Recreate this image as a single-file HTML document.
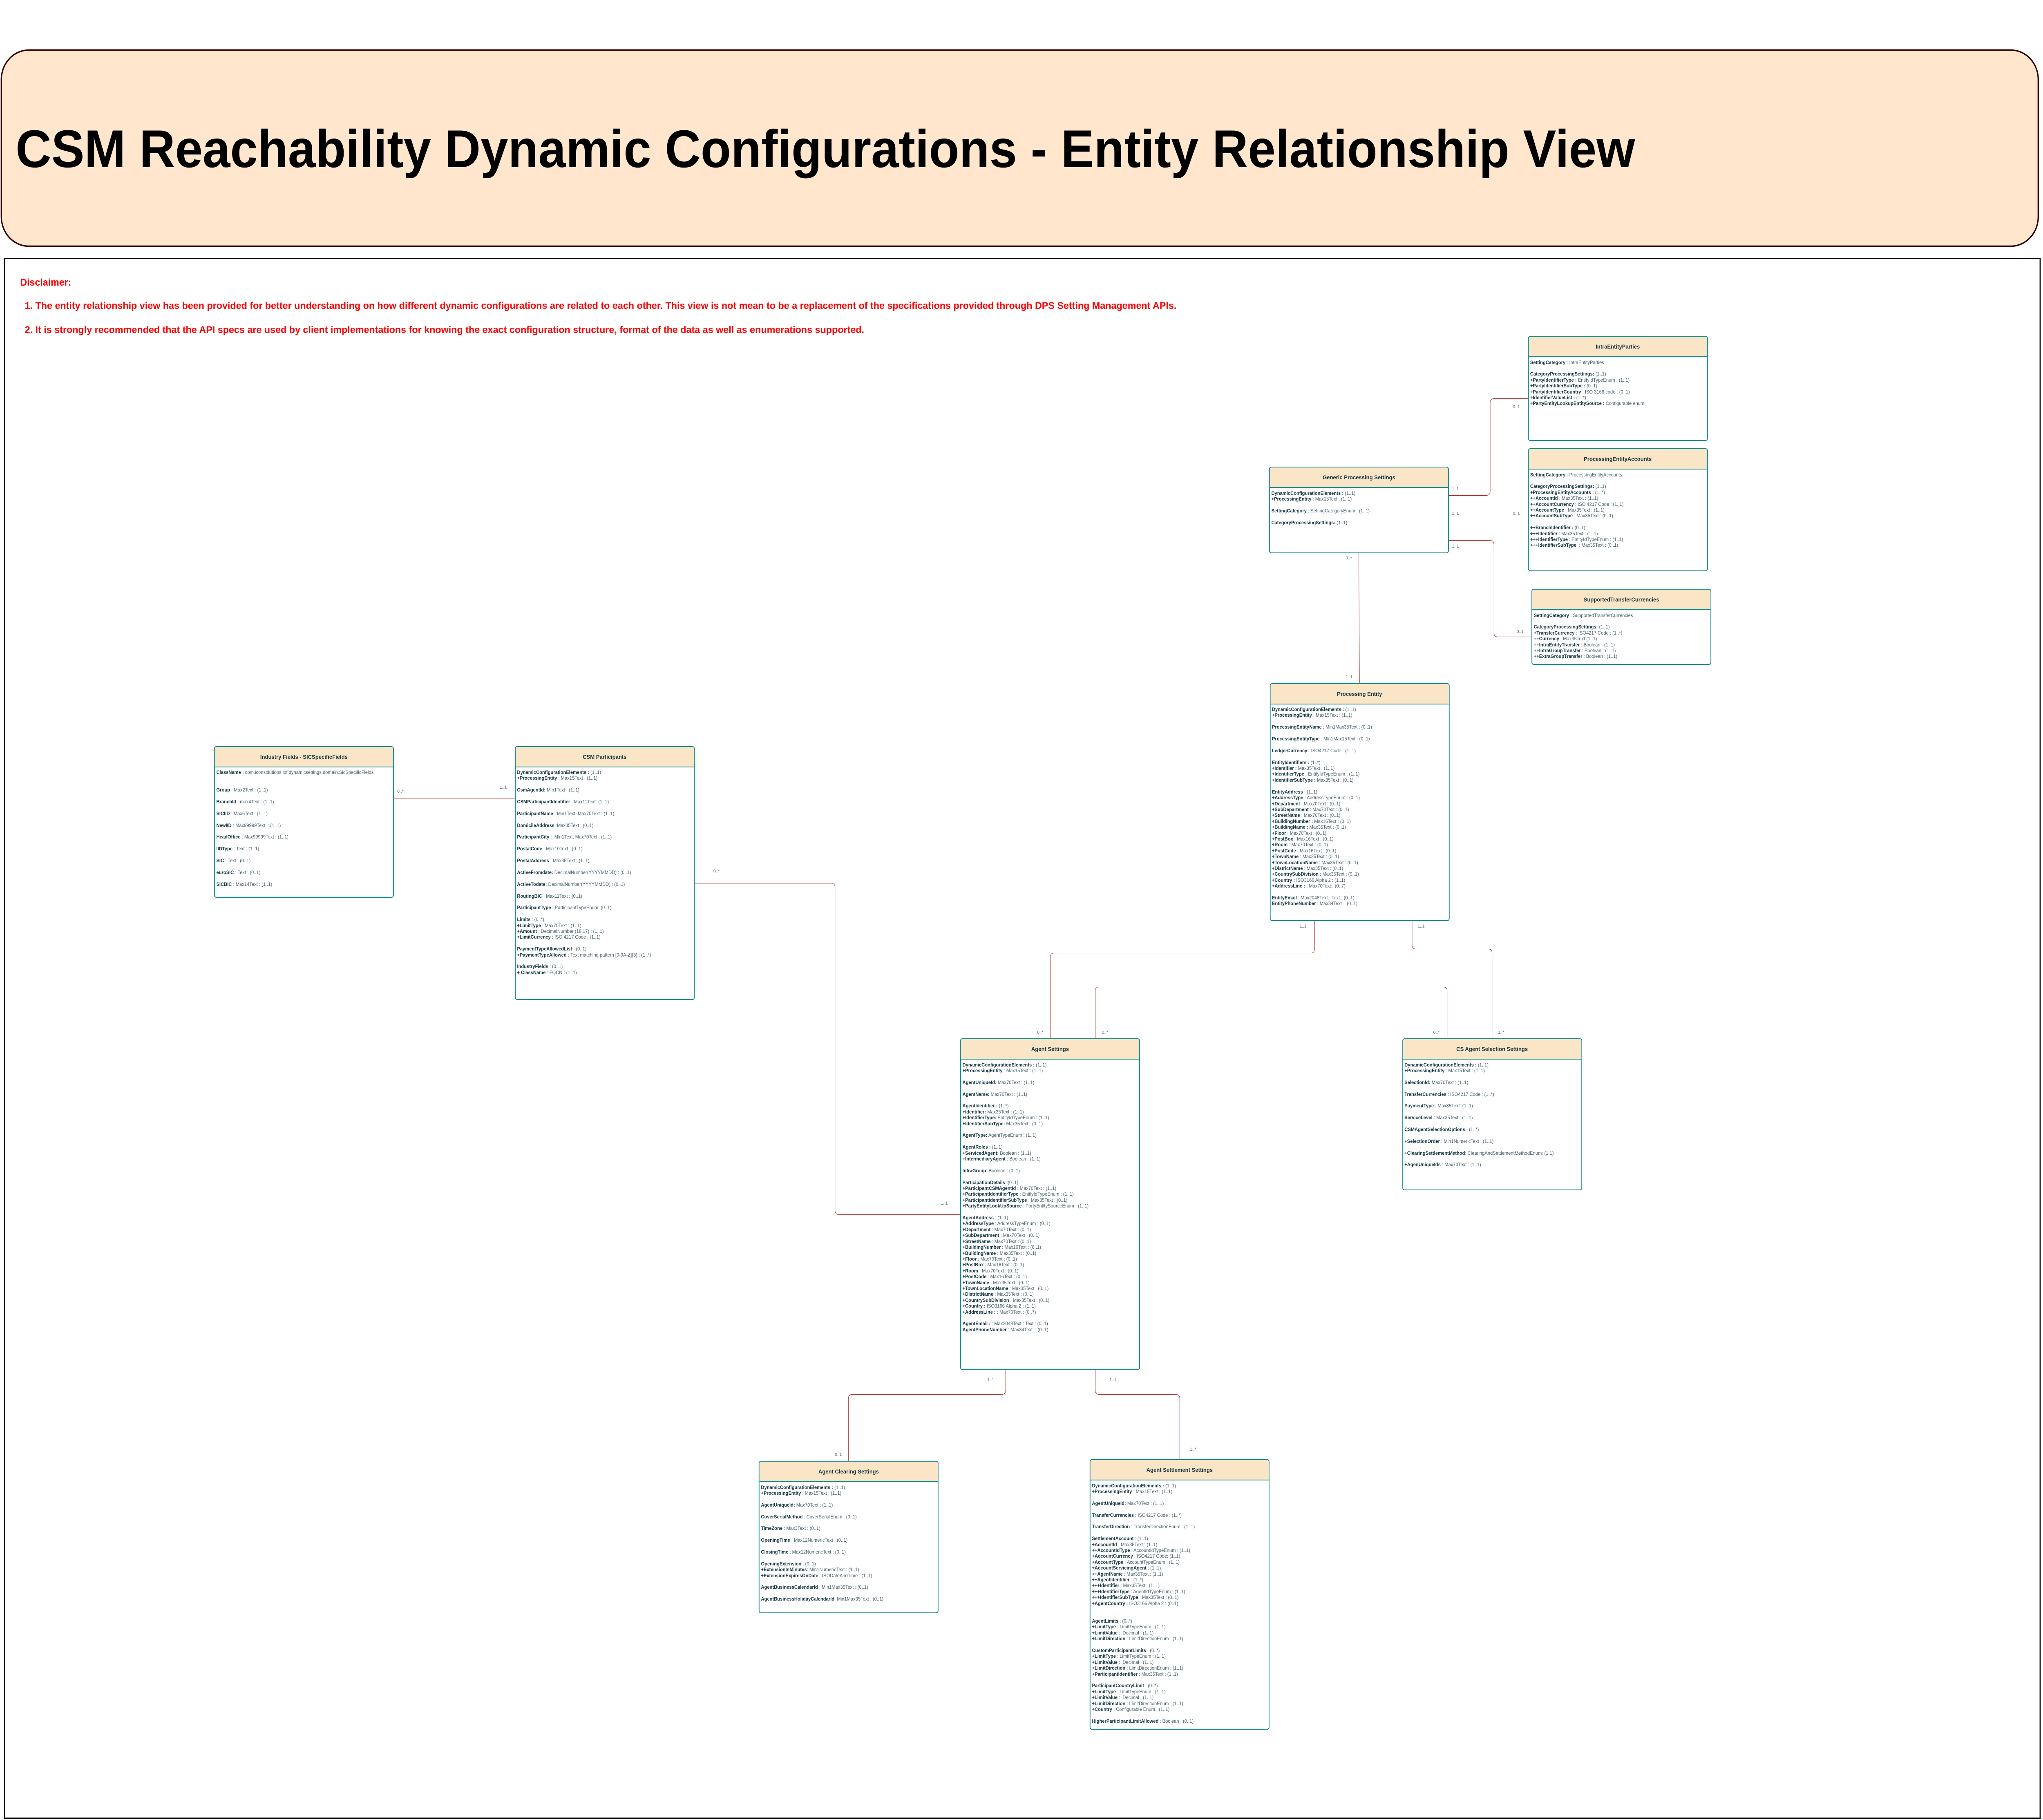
<!DOCTYPE html>
<html lang="en">
<head>
<meta charset="utf-8">
<title>CSM Reachability Dynamic Configurations - Entity Relationship View</title>
<style>
html,body{margin:0;padding:0;background:#fff;width:100%;height:100%;overflow:hidden;font-family:"Liberation Sans",Arial,sans-serif}
svg.root{position:fixed;left:0;top:0;width:100vw;height:100vh;display:block}
.page{position:relative;width:5364px;height:4454px;overflow:hidden}
.box{position:absolute;box-sizing:border-box;width:472px;border:2px solid #0F8B8D;border-radius:6px;background:#fff}
.hd{box-sizing:content-box;height:48px;line-height:48px;background:#FAE5C7;border-bottom:2px solid #0F8B8D;border-radius:4px 4px 0 0;text-align:center;font-size:14px;font-weight:bold;color:#143642;white-space:pre}
.tx{position:absolute;left:4px;top:55.5px;font-size:12px;line-height:14.4px;color:#4a636e;white-space:pre}
.tx b{color:#143642}
.l{position:absolute;font-size:11px;line-height:14px;color:#5a6f78;white-space:pre}
</style>
</head>
<body>
<svg class="root" viewBox="0 0 5364 4454" preserveAspectRatio="none" xmlns="http://www.w3.org/2000/svg">
<rect x="3.5" y="122.5" width="5348" height="480" rx="72" ry="72" fill="#FFE6CC" stroke="#330000" stroke-width="3.5"/>
<rect x="11.5" y="632.5" width="5345" height="3817" fill="#fff" stroke="#000" stroke-width="3"/>
<text x="41" y="409" font-family="Liberation Sans, Arial, sans-serif" font-size="130" font-weight="bold" fill="#000">CSM Reachability Dynamic Configurations - Entity Relationship View</text>
<text x="53" y="699" font-family="Liberation Sans, Arial, sans-serif" font-size="24" font-weight="bold" fill="#FF0000" textLength="134" lengthAdjust="spacingAndGlyphs">Disclaimer:</text>
<text x="65" y="756" font-family="Liberation Sans, Arial, sans-serif" font-size="24" font-weight="bold" fill="#FF0000" textLength="3024" lengthAdjust="spacingAndGlyphs">1. The entity relationship view has been provided for better understanding on how different dynamic configurations are related to each other. This view is not mean to be a replacement of the specifications provided through DPS Setting Management APIs.</text>
<text x="65" y="815" font-family="Liberation Sans, Arial, sans-serif" font-size="24" font-weight="bold" fill="#FF0000" textLength="2204" lengthAdjust="spacingAndGlyphs">2. It is strongly recommended that the API specs are used by client implementations for knowing the exact configuration structure, format of the data as well as enumerations supported.</text>
<g fill="none" stroke="#A8201A" stroke-width="1">
<path d="M3803 1212.5H3902Q3912.5 1212.5 3912.5 1202V985.5Q3912.5 975.5 3922.5 975.5H4012"/>
<path d="M3803 1272.5H4012"/>
<path d="M3803 1322.5H3912Q3922.5 1322.5 3922.5 1333V1548.5Q3922.5 1558.5 3932.5 1558.5H4022"/>
<path d="M3567.5 1352L3569.5 1672"/>
<path d="M3451.5 2253V2322Q3451.5 2332.5 3441 2332.5H2767.5Q2757.5 2332.5 2757.5 2342.5V2542"/>
<path d="M3707.5 2253V2312.5Q3707.5 2322.5 3717.5 2322.5H3907.5Q3917.5 2322.5 3917.5 2332.5V2542"/>
<path d="M2875.5 2542V2425.5Q2875.5 2415.5 2885.5 2415.5H3789.5Q3799.5 2415.5 3799.5 2425.5V2542"/>
<path d="M1822 2161.5H2182Q2192.5 2161.5 2192.5 2172V2962Q2192.5 2972.5 2203 2972.5H2522"/>
<path d="M2640.5 3352V3402Q2640.5 3412.5 2630 3412.5H2237.5Q2227.5 3412.5 2227.5 3422.5V3576"/>
<path d="M2875.5 3352V3402Q2875.5 3412.5 2886 3412.5H3087.5Q3097.5 3412.5 3097.5 3422.5V3572"/>
<path d="M1033 1953.5H1352"/>
</g>
<foreignObject x="0" y="0" width="5364" height="4454">
<div xmlns="http://www.w3.org/1999/xhtml" class="page">

<div class="l" style="left:3812px;top:1190px">1..1</div>
<div class="l" style="left:3972px;top:989px">0..1</div>
<div class="l" style="left:3812px;top:1250px">1..1</div>
<div class="l" style="left:3972px;top:1250px">0..1</div>
<div class="l" style="left:3812px;top:1330px">1..1</div>
<div class="l" style="left:3982px;top:1539px">0..1</div>
<div class="l" style="left:3533px;top:1359px">0..*</div>
<div class="l" style="left:3533px;top:1650px">1..1</div>
<div class="l" style="left:3412px;top:2260px">1..1</div>
<div class="l" style="left:3722px;top:2260px">1..1</div>
<div class="l" style="left:2723px;top:2520px">0..*</div>
<div class="l" style="left:2893px;top:2520px">0..*</div>
<div class="l" style="left:3763px;top:2520px">0..*</div>
<div class="l" style="left:3933px;top:2520px">1..*</div>
<div class="l" style="left:1043px;top:1930px">0..*</div>
<div class="l" style="left:1312px;top:1920px">1..1</div>
<div class="l" style="left:1873px;top:2125px">0..*</div>
<div class="l" style="left:2470px;top:2938px">1..1</div>
<div class="l" style="left:2592px;top:3370px">1..1</div>
<div class="l" style="left:2913px;top:3370px">1..1</div>
<div class="l" style="left:2192px;top:3553px">0..1</div>
<div class="l" style="left:3124px;top:3540px">1..*</div>

<div class="box" style="left:3332px;top:1142px;height:211.5px"><div class="hd">Generic Processing Settings</div><div class="tx"><b>DynamicConfigurationElements :</b> (1..1)
<b>+ProcessingEntity</b> : Max15Text : (1..1)

<b>SettingCategory</b> : SettingCategoryEnum : (1..1)

<b>CategoryProcessingSettings:</b> (1..1)</div></div>

<div class="box" style="left:4011.5px;top:822px;height:256.5px"><div class="hd">IntraEntityParties</div><div class="tx"><b>SettingCategory</b> : IntraEntityParties

<b>CategoryProcessingSettings:</b> (1..1)
<b>+PartyIdentifierType :</b> EntityIdTypeEnum : (1..1)
<b>+PartyIdentifierSubType :</b> (0..1)
+<b>PartyIdentifierCountry</b> : ISO 3166 code : (0..1)
+<b>IdentifierValueList :</b> (1..*)
+<b>PartyEntityLookupEntitySource :</b> Configurable enum</div></div>

<div class="box" style="left:4011.5px;top:1097px;height:301px"><div class="hd">ProcessingEntityAccounts</div><div class="tx"><b>SettingCategory</b> : ProcessingEntityAccounts

<b>CategoryProcessingSettings:</b> (1..1)
<b>+ProcessingEntityAccounts :</b> (1..*)
<b>++AccountId</b> : Max35Text : (1..1)
<b>++AccountCurrency</b> : ISO 4217 Code : (1..1)
<b>++AccountType</b> : Max35Text : (1..1)
<b>++AccountSubType</b> : Max35Text : (0..1)

<b>++BranchIdentifier :</b> (0..1)
<b>+++Identifier</b> : Max35Text : (1..1)
<b>+++IdentifierType</b> : EntityIdTypeEnum : (1..1)
<b>+++IdentifierSubType</b>  : Max35Text : (0..1)</div></div>

<div class="box" style="left:4021px;top:1441px;height:185.5px"><div class="hd">SupportedTransferCurrencies</div><div class="tx"><b>SettingCategory</b> : SupportedTransferCurrencies

<b>CategoryProcessingSettings:</b> (1..1)
<b>+TransferCurrency</b> : ISO4217 Code : (1..*)
++<b>Currency</b> : Max35Text (1..1)
++<b>IntraEntityTransfer</b> : Boolean : (1..1)
++<b>IntraGroupTransfer</b> : Boolean : (1..1)
<b>++ExtraGroupTransfer</b> : Boolean : (1..1)</div></div>

<div class="box" style="left:3333.5px;top:1671.5px;height:582px"><div class="hd">Processing Entity</div><div class="tx"><b>DynamicConfigurationElements :</b> (1..1)
<b>+ProcessingEntity</b> : Max15Text : (1..1)

<b>ProcessingEntityName</b> : Min1Max35Text : (0..1)

<b>ProcessingEntityType</b> : Min1Max15Text : (0..1)

<b>LedgerCurrency</b> : ISO4217 Code : (1..1)

<b>EntityIdentifiers :</b> (1..*)
<b>+Identifier :</b> Max35Text : (1..1)
<b>+IdentifierType</b> : EntityIdTypeEnum : (1..1)
<b>+IdentifierSubType :</b> Max35Text : (0..1)

<b>EntityAddress</b> : (1..1)
<b>+AddressType</b> : AddressTypeEnum : (0..1)
<b>+Department</b> : Max70Text : (0..1)
<b>+SubDepartment</b> : Max70Text : (0..1)
<b>+StreetName</b> : Max70Text : (0..1)
<b>+BuildingNumber :</b> Max16Text : (0..1)
<b>+BuildingName :</b> Max35Text : (0..1)
<b>+Floor</b> : Max70Text : (0..1)
<b>+PostBox</b> : Max16Text : (0..1)
<b>+Room</b> : Max70Text : (0..1)
<b>+PostCode</b> : Max16Text : (0..1)
<b>+TownName</b> : Max35Text : (0..1)
<b>+TownLocationName</b> : Max35Text : (0..1)
<b>+DistrictName</b> : Max35Text : (0..1)
<b>+CountrySubDivision</b> : Max35Text : (0..1)
<b>+Country :</b> ISO3166 Alpha 2 : (1..1)
<b>+AddressLine :</b> : Max70Text : (0..7)

<b>EntityEmail</b> : Max2048Text : Text : (0..1)
<b>EntityPhoneNumber</b> : Max34Text  : (0..1)</div></div>

<div class="box" style="left:562px;top:1825.5px;height:371.5px"><div class="hd">Industry Fields - SICSpecificFields</div><div class="tx"><b>ClassName :</b> com.iconsolutions.ipf.dynamicsettings.domain.SicSpecificFields


<b>Group</b> : Max2Text : (1..1)

<b>BranchId</b> : max4Text : (1..1)

<b>SICIID</b> : Max6Text : (1..1)

<b>NewIID</b> : Max99999Text  : (1..1)

<b>HeadOffice</b> : Max99999Text : (1..1)

<b>IIDType</b> : Text : (1..1)

<b>SIC</b> : Text : (0..1)

<b>euroSIC</b> : Text : (0..1)

<b>SICBIC</b> : Max14Text : (1..1)</div></div>

<div class="box" style="left:1351.5px;top:1825.5px;height:621.5px"><div class="hd">CSM Participants</div><div class="tx"><b>DynamicConfigurationElements :</b> (1..1)
<b>+ProcessingEntity</b> : Max15Text : (1..1)

<b>CsmAgentId:</b> Min1Text : (1..1)

<b>CSMParticipantIdentifier</b> : Max11Text: (1..1)

<b>ParticipantName</b> : Min1Text, Max70Text : (1..1)

<b>DomicileAddress</b> :Max35Text : (0..1)

<b>ParticipantCity</b> :  Min1Text, Max70Text : (1..1)

<b>PostalCode</b> : Max10Text : (0..1)

<b>PostalAddress</b> : Max35Text : (1..1)

<b>ActiveFromdate:</b> DecimalNumber(YYYYMMDD) : (0..1)

<b>ActiveTodate:</b> DecimalNumber(YYYYMMDD) : (0..1)

<b>RoutingBIC</b> : Max11Text : (0..1)

<b>ParticipantType</b> : ParticipantTypeEnum: (0..1)

<b>Limits</b> : (0..*)
<b>+LimitType</b> : Max70Text : (1..1)
<b>+Amount</b> : DecimalNumber (18,17) : (1..1)
<b>+LimitCurrency</b> : ISO 4217 Code : (1..1)

<b>PaymentTypeAllowedList</b> : (0..1)
<b>+PaymentTypeAllowed</b> : Text matching pattern [0-9A-Z]{3} : (1..*)

<b>IndustryFields</b> : (0..1)
<b>+ ClassName</b> : FQCN : (1..1)</div></div>

<div class="box" style="left:2521px;top:2541px;height:812px"><div class="hd">Agent Settings</div><div class="tx"><b>DynamicConfigurationElements :</b> (1..1)
<b>+ProcessingEntity</b> : Max15Text : (1..1)

<b>AgentUniqueId:</b> Max70Text : (1..1)

<b>AgentName:</b> Max70Text : (1..1)

<b>AgentIdentifier :</b> (1..*)
<b>+Identifier:</b> Max35Text : (1..1)
<b>+IdentifierType:</b> EntityIdTypeEnum : (1..1)
<b>+IdentifierSubType:</b> Max35Text : (0..1)

<b>AgentType:</b> AgentTypeEnum : (1..1)

<b>AgentRoles :</b> (1..1)
<b>+ServicedAgent:</b> Boolean : (1..1)
+<b>IntermediaryAgent</b> : Boolean : (1..1)

<b>IntraGroup</b>: Boolean : (0..1)

<b>ParticipationDetails</b>: (0..1)
<b>+ParticipantCSMAgentId</b> : Max70Text : (1..1)
<b>+ParticipantIdentifierType</b> : EntityIdTypeEnum : (1..1)
<b>+ParticipantIdentifierSubType</b> : Max35Text : (0..1)
<b>+PartyEntityLookUpSource</b> : PartyEntitySourceEnum : (1..1)

<b>AgentAddress</b> : (1..1)
<b>+AddressType</b> : AddressTypeEnum : (0..1)
<b>+Department</b> : Max70Text : (0..1)
<b>+SubDepartment</b> : Max70Text : (0..1)
<b>+StreetName</b> : Max70Text : (0..1)
<b>+BuildingNumber</b> : Max16Text : (0..1)
<b>+BuildingName</b> : Max35Text : (0..1)
<b>+Floor</b> : Max70Text : (0..1)
<b>+PostBox</b> : Max16Text : (0..1)
<b>+Room</b> : Max70Text : (0..1)
<b>+PostCode</b> : Max16Text : (0..1)
<b>+TownName</b> : Max35Text : (0..1)
<b>+TownLocationName</b> : Max35Text : (0..1)
<b>+DistrictName</b> : Max35Text : (0..1)
<b>+CountrySubDivision</b> : Max35Text : (0..1)
<b>+Country :</b> ISO3166 Alpha 2 : (1..1)
<b>+AddressLine :</b> : Max70Text : (0..7)

<b>AgentEmail :</b> : Max2048Text : Text : (0..1)
<b>AgentPhoneNumber</b> : Max34Text  : (0..1)</div></div>

<div class="box" style="left:3681.5px;top:2541px;height:372px"><div class="hd">CS Agent Selection Settings</div><div class="tx"><b>DynamicConfigurationElements :</b> (1..1)
<b>+ProcessingEntity</b> : Max15Text : (1..1)

<b>SelectionId:</b> Max70Text : (1..1)

<b>TransferCurrencies</b> : ISO4217 Code : (1..*)

<b>PaymentType</b> : Max35Text: (1..1)

<b>ServiceLevel</b> : Max35Text : (1..1)

<b>CSMAgentSelectionOptions</b> : (1..*)

<b>+SelectionOrder</b> : Min1NumericText : (1..1)

<b>+ClearingSettlementMethod</b>: ClearingAndSettlementMethodEnum: (1.1)

<b>+AgenUniqueIds</b> : Max70Text : (1..1)</div></div>

<div class="box" style="left:1992px;top:3575px;height:372.5px"><div class="hd">Agent Clearing Settings</div><div class="tx"><b>DynamicConfigurationElements :</b> (1..1)
<b>+ProcessingEntity</b> : Max15Text : (1..1)

<b>AgentUniqueId:</b> Max70Text : (1..1)

<b>CoverSerialMethod</b> : CoverSerialEnum : (0..1)

<b>TimeZone</b> : Max3Text : (0..1)

<b>OpeningTime</b> : Max12NumericText : (0..1)

<b>ClosingTime</b> : Max12NumericText : (0..1)

<b>OpeningExtension</b> : (0..1)
<b>+ExtensionInMinutes</b>: Min1NumericText : (1..1)
<b>+ExtensionExpiresOnDate</b> : ISODateAndTime : (1..1)

<b>AgentBusinessCalendarId</b> : Min1Max35Text : (0..1)

<b>AgentBusinessHolidayCalendarId</b>: Min1Max35Text : (0..1)</div></div>

<div class="box" style="left:2861px;top:3571px;height:662px"><div class="hd">Agent Settlement Settings</div><div class="tx"><b>DynamicConfigurationElements :</b> (1..1)
<b>+ProcessingEntity</b> : Max15Text : (1..1)

<b>AgentUniqueId:</b> Max70Text : (1..1)

<b>TransferCurrencies</b> : ISO4217 Code : (1..*)

<b>TransferDirection</b> : TransferDirectionEnum : (1..1)

<b>SettlementAccount</b> : (1..1)
<b>+AccountId</b> : Max35Text : (1..1)
<b>++AccountIdType</b> : AccountIdTypeEnum : (1..1)
<b>+AccountCurrency</b> : ISO4217 Code: (1..1)
<b>+AccountType</b> : AccountTypeEnum : (1..1)
<b>+AccountServicingAgent</b> : (1..1)
<b>++AgentName</b> : Max35Text : (1..1)
<b>++AgentIdentifier</b> : (1..*)
<b>+++Identifier</b> : Max35Text : (1..1)
<b>+++IdentifierType</b> : AgentIdTypeEnum : (1..1)
<b>+++IdentifierSubType</b> : Max35Text : (0..1)
<b>+AgentCountry :</b> ISO3166 Alpha 2 : (0..1)


<b>AgentLimits</b> : (0..*)
<b>+LimitType</b> : LimitTypeEnum : (1..1)
<b>+LimitValue</b> :  Decimal : (1..1)
<b>+LimitDirection</b> : LimitDirectionEnum : (1..1)

<b>CustomParticipantLimits</b> : (0..*)
<b>+LimitType</b> : LimitTypeEnum : (1..1)
<b>+LimitValue</b> :  Decimal : (1..1)
<b>+LimitDirection</b> : LimitDirectionEnum : (1..1)
<b>+ParticipantIdentifier</b> : Max35Text : (1..1)

<b>ParticipantCountryLimit</b> : (0..*)
<b>+LimitType</b> : LimitTypeEnum : (1..1)
<b>+LimitValue</b> :  Decimal : (1..1)
<b>+LimitDirection</b> : LimitDirectionEnum : (1..1)
<b>+Country</b> : Configurable Enum : (1..1)

<b>HigherParticipantLimitAllowed</b> : Boolean : (0..1)</div></div>
</div>
</foreignObject>
</svg>
</body>
</html>
